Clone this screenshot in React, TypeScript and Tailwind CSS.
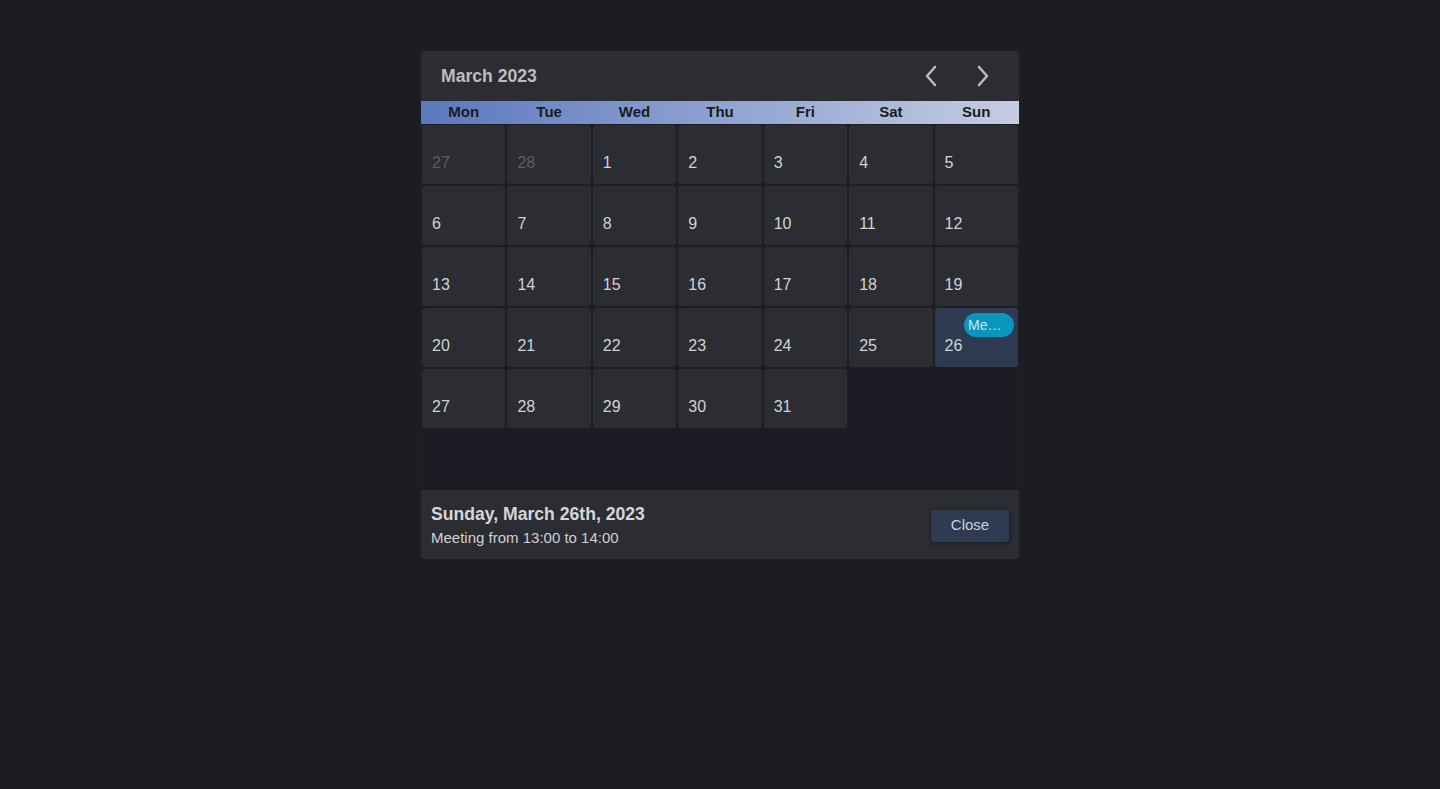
import React from 'react'

const WEEKDAYS = ['Mon', 'Tue', 'Wed', 'Thu', 'Fri', 'Sat', 'Sun']

type Day = { label: number; faded?: boolean; selected?: boolean; event?: string }

const DAYS: (Day | null)[] = [
  { label: 27, faded: true },
  { label: 28, faded: true },
  ...Array.from({ length: 31 }, (_, i) => {
    const d = i + 1
    return d === 26 ? { label: d, selected: true, event: 'Meeting' } : { label: d }
  }),
]

while (DAYS.length < 42) DAYS.push(null)

function Chevron({ dir }: { dir: 'left' | 'right' }) {
  return (
    <svg width="14" height="22" viewBox="0 0 14 22" fill="none">
      <path
        d={dir === 'left' ? 'M11 2 L3 11 L11 20' : 'M3 2 L11 11 L3 20'}
        stroke="#b9b9bc"
        strokeWidth="2.6"
        strokeLinecap="round"
        strokeLinejoin="round"
      />
    </svg>
  )
}

export default function App() {
  return (
    <div
      className="min-h-screen w-full bg-[#1c1d22] pt-[50px]"
      style={{ fontFamily: '"Liberation Sans", Arial, sans-serif' }}
    >
      <div className="mx-auto w-[600px] overflow-hidden rounded-[4px] border border-[#1f2025] bg-[#2c2d32]">
        <header className="flex h-[50px] items-center justify-between pl-5 pr-[29px]">
          <h1 className="pt-[1px] text-[17.6px] font-bold text-[#bdbdbf]">March 2023</h1>
          <div className="flex items-center gap-[38px]">
            <button type="button" className="flex items-center">
              <Chevron dir="left" />
            </button>
            <button type="button" className="flex items-center">
              <Chevron dir="right" />
            </button>
          </div>
        </header>

        <div className="grid h-[23px] grid-cols-7 bg-gradient-to-r from-[#5b78bd] to-[#c5cde2]">
          {WEEKDAYS.map((d) => (
            <div key={d} className="flex items-center justify-center text-[15px] font-bold text-[#1a1b20]">
              {d}
            </div>
          ))}
        </div>

        <div className="grid grid-cols-7 grid-rows-[repeat(6,61px)] bg-[#1c1d24]">
          {DAYS.map((day, i) =>
            day ? (
              <div
                key={i}
                className={`relative rounded-[4px] border border-[#1e1f25] pl-[10px] pt-[26px] ${
                  day.selected ? 'bg-[#2d3a4f]' : 'bg-[#2c2d32]'
                }`}
              >
                {day.event && (
                  <span className="absolute right-[4px] top-[5px] flex h-6 w-[50px] items-center rounded-full bg-[#0a96bc] pl-[4px] text-sm text-[#cde4ec]">
                    Me…
                  </span>
                )}
                <span className={`text-base leading-6 ${day.faded ? 'text-[#5c5d62]' : 'text-[#d2d2d4]'}`}>
                  {day.label}
                </span>
              </div>
            ) : (
              <div key={i} />
            )
          )}
        </div>

        <footer className="flex h-[69px] items-center justify-between pl-[10px] pr-[10px]">
          <div className="flex flex-col">
            <p className="text-[17.6px] font-bold leading-6 text-[#d6d6d8]">Sunday, March 26th, 2023</p>
            <p className="mt-[2px] text-[15px] leading-5 text-[#d0d0d2]">Meeting from 13:00 to 14:00</p>
          </div>
          <button
            type="button"
            className="mt-[2px] h-8 w-[78px] rounded-[4px] bg-[#2e3b51] text-[15px] text-[#cfd2d8] shadow-[0_1px_4px_rgba(0,0,0,0.5)]"
          >
            Close
          </button>
        </footer>
      </div>
    </div>
  )
}
